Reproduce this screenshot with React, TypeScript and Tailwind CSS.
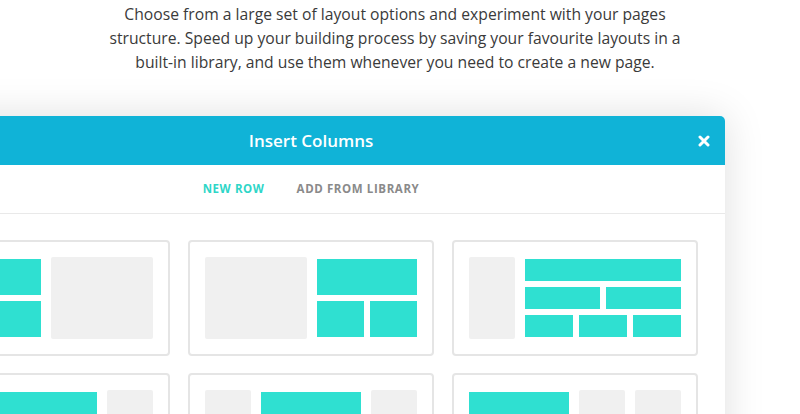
import React from 'react';

const font = { fontFamily: '"Open Sans", "Liberation Sans", sans-serif' };

function Teal({ className = '' }: { className?: string }) {
  return <div className={`bg-[#2fe0d1] ${className}`} />;
}

function Gray({ className = '' }: { className?: string }) {
  return <div className={`bg-[#f0f0f0] rounded-[2px] ${className}`} />;
}

function Card({ children }: { children: React.ReactNode }) {
  return (
    <div className="h-[116px] rounded-[4px] border-2 border-[#e5e5e5] bg-white p-[15px] flex gap-[10px]">
      {children}
    </div>
  );
}

function CloseIcon() {
  return (
    <svg width="12" height="12" viewBox="0 0 12 12">
      <path d="M2 2 L10 10 M10 2 L2 10" stroke="white" strokeWidth="3" strokeLinecap="round" />
    </svg>
  );
}

export default function App() {
  return (
    <div className="w-[800px] h-[414px] overflow-hidden bg-white" style={font}>
      <p className="pt-[2px] w-[790px] whitespace-nowrap text-center text-[15.7px] leading-[24px] text-[#3a3a3a]">
        Choose from a large set of layout options and experiment with your pages
        <br />
        structure. Speed up your building process by saving your favourite layouts in a
        <br />
        built-in library, and use them whenever you need to create a new page.
      </p>

      <div className="mt-[42px] ml-[-103px] w-[828px] rounded-t-[5px] bg-white shadow-[0_0_40px_rgba(0,0,0,0.13)]">
        <div className="relative h-[49px] rounded-t-[5px] bg-[#10b3d7] flex items-center justify-center">
          <span className="text-white text-[17px] font-semibold">Insert Columns</span>
          <div className="absolute right-[15px] top-[19px]">
            <CloseIcon />
          </div>
        </div>

        <div className="h-[49px] border-b border-[#e9e9e9] flex items-center justify-center gap-[32px] text-[11.5px] font-bold tracking-[0.6px]">
          <span className="text-[#2fd6c8]">NEW ROW</span>
          <span className="text-[#8a8a8a]">ADD FROM LIBRARY</span>
        </div>

        <div className="px-[27px] pt-[26px] pb-[40px] grid grid-cols-3 gap-x-[18px] gap-y-[17px]">
          <Card>
            <div className="flex-1 py-[2px] flex flex-col gap-[6px]">
              <Teal className="flex-1" />
              <Teal className="flex-1" />
            </div>
            <Gray className="w-[102px]" />
          </Card>
          <Card>
            <Gray className="w-[102px]" />
            <div className="flex-1 py-[2px] flex flex-col gap-[6px]">
              <Teal className="flex-1" />
              <div className="flex-1 flex gap-[6px]">
                <Teal className="flex-1" />
                <Teal className="flex-1" />
              </div>
            </div>
          </Card>
          <Card>
            <Gray className="w-[46px]" />
            <div className="flex-1 py-[2px] flex flex-col gap-[6px]">
              <Teal className="flex-1" />
              <div className="flex-1 flex gap-[6px]">
                <Teal className="flex-1" />
                <Teal className="flex-1" />
              </div>
              <div className="flex-1 flex gap-[6px]">
                <Teal className="flex-1" />
                <Teal className="flex-1" />
                <Teal className="flex-1" />
              </div>
            </div>
          </Card>

          <Card>
            <div className="flex-1 py-[2px] flex">
              <Teal className="flex-1" />
            </div>
            <Gray className="w-[46px]" />
          </Card>
          <Card>
            <Gray className="w-[46px]" />
            <div className="flex-1 py-[2px] flex">
              <Teal className="flex-1" />
            </div>
            <Gray className="w-[46px]" />
          </Card>
          <Card>
            <div className="flex-1 py-[2px] flex">
              <Teal className="flex-1" />
            </div>
            <Gray className="w-[46px]" />
            <Gray className="w-[46px]" />
          </Card>
        </div>
      </div>
    </div>
  );
}
